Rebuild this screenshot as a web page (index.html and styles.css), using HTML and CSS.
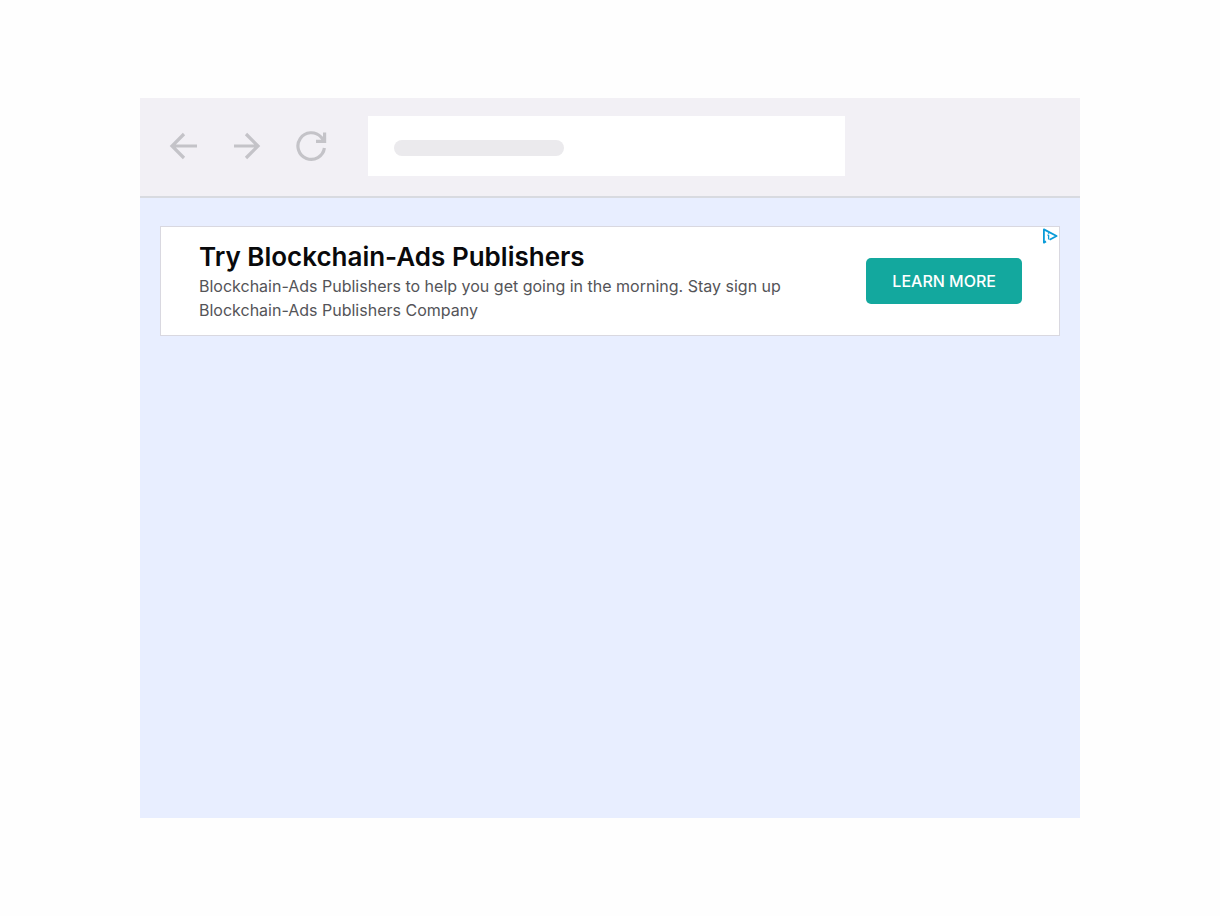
FILE: index.html
```html
<!DOCTYPE html>
<html lang="en">
<head>
    <meta charset="UTF-8">
    <meta name="viewport" content="width=device-width, initial-scale=1.0">
    <title>Blockchain-Ads Publishers</title>
    <link rel="stylesheet" href="styles.css">
</head>
<body>
    <div class="browser">
        <header class="toolbar">
            <button type="button" class="nav_btn" aria-label="Back">
                <svg viewBox="0 0 32 32"><path d="M29 16H4M16 4L4 16l12 12"/></svg>
            </button>
            <button type="button" class="nav_btn" aria-label="Forward">
                <svg viewBox="0 0 32 32"><path d="M2 16h25M14 4l12 12-12 12"/></svg>
            </button>
            <button type="button" class="nav_btn" aria-label="Reload">
                <svg viewBox="0 0 32 32"><path d="M28.4 18A13.3 13.3 0 1 1 25 7L28 10.5M28.6 2.5V11.3H20"/></svg>
            </button>
            <div class="address">
                <div class="address_line"></div>
            </div>
        </header>
        <main class="page">
            <section class="ad">
                <div class="ad_text">
                    <h1>Try Blockchain-Ads Publishers</h1>
                    <p>Blockchain-Ads Publishers to help you get going in the morning. Stay sign up Blockchain-Ads Publishers Company</p>
                </div>
                <button type="button" class="ad_btn">LEARN MORE</button>
                <a href="#" class="ad_choices" aria-label="AdChoices">
                    <svg viewBox="0 0 16 16">
                        <path d="M4 13.4L1.9 14.6V1.4L14.6 8L7.6 11.8"/>
                        <path class="info" d="M6.6 6.8v4.6M6.6 4.6v1.1M5.4 7.2h1.2"/>
                    </svg>
                </a>
            </section>
        </main>
    </div>
</body>
</html>
```
FILE: styles.css
```css
* { margin: 0; padding: 0; box-sizing: border-box; }
body {
    min-height: 100vh;
    padding: 98px 140px;
    display: flex;
    background: #fefefe;
    font-family: Inter, "Liberation Sans", sans-serif;
}
button {
    border: 0;
    font-family: inherit;
    cursor: pointer;
}
svg {
    display: block;
    width: 100%;
    fill: none;
}
.browser {
    flex: 1;
    display: flex;
    flex-direction: column;
    background: #e8eeff;
}

/* toolbar */
.toolbar {
    display: flex;
    align-items: center;
    gap: 32px;
    padding: 18px 28px 20px;
    background: #f2f0f5;
    border-bottom: 2px solid #d8dae0;
}
.nav_btn {
    flex: none;
    width: 32px;
    background: none;
}
.nav_btn svg {
    stroke: #c4c3c8;
    stroke-width: 3.2;
}
.address {
    width: 54%;
    height: 60px;
    margin-left: 8px;
    padding: 4px 26px 0;
    display: flex;
    align-items: center;
    background: #fff;
}
.address_line {
    width: 40%;
    height: 16px;
    border-radius: 8px;
    background: #ebeaed;
}

/* banner */
.page {
    padding: 28px 20px;
}
.ad {
    position: relative;
    display: flex;
    align-items: center;
    justify-content: space-between;
    gap: 40px;
    padding: 13px 37px 13px 38px;
    background: #fff;
    border: 1px solid #d9d8e0;
}
.ad_text {
    max-width: 600px;
}
.ad_text h1 {
    font-size: 26px;
    font-weight: 600;
    line-height: 34px;
    color: #09090b;
}
.ad_text p {
    font-size: 16px;
    line-height: 24px;
    color: #545458;
}
.ad_btn {
    flex: none;
    padding: 11px 26px;
    border-radius: 5px;
    background: #13a89e;
    color: #fff;
    font-size: 16px;
    font-weight: 500;
    line-height: 24px;
}
.ad_choices {
    position: absolute;
    top: 1px;
    right: 1px;
    width: 16px;
}
.ad_choices svg {
    stroke: #0a9bd8;
    stroke-width: 1.8;
    stroke-linejoin: round;
}
.ad_choices .info {
    stroke-width: 1.3;
}
```
